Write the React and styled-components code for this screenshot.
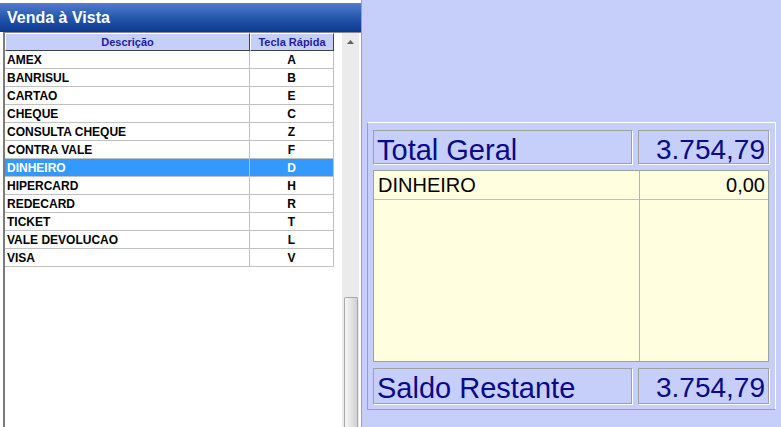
import React from "react";
import styled, { createGlobalStyle } from "styled-components";

const Global = createGlobalStyle`
  html, body { margin: 0; padding: 0; background: #ffffff; }
  body { font-family: "Liberation Sans", Arial, sans-serif; }
  #root { width: 781px; height: 427px; overflow: hidden; }
`;

const Screen = styled.div`
  display: flex;
  width: 781px;
  height: 427px;
  overflow: hidden;
`;

const LeftPanel = styled.div`
  width: 362px;
  flex: none;
  display: flex;
  flex-direction: column;
  background: #ffffff;
  padding-top: 3px;
  box-sizing: border-box;
  border-right: 1px solid #a0a0a0;
`;

const TitleBar = styled.div`
  height: 29px;
  flex: none;
  display: flex;
  align-items: center;
  padding-left: 7px;
  background: linear-gradient(#4f7ed0, #2a5bb0 45%, #0b3990);
  color: #ffffff;
  font-weight: bold;
  font-size: 16px;
`;

const GridFrame = styled.div`
  flex: 1;
  display: flex;
  margin-left: 3px;
  border-left: 2px solid #7c7c7c;
  border-top: 1px solid #8a8a8a;
  min-height: 0;
`;

const GridBody = styled.div`
  width: 337px;
  flex: none;
  background: #ffffff;
`;

const GridRow = styled.div`
  display: grid;
  grid-template-columns: 245px 84px;
  width: 329px;
`;

const HeadCell = styled.div`
  height: 18px;
  box-sizing: border-box;
  background: #c6cefa;
  border-top: 1px solid #ffffff;
  border-left: 1px solid #ffffff;
  border-right: 1px solid #404040;
  border-bottom: 1px solid #404040;
  color: #1e1e98;
  font-size: 11px;
  font-weight: bold;
  text-align: center;
  line-height: 16px;
`;

const Cell = styled.div`
  height: 18px;
  box-sizing: border-box;
  border-right: 1px solid #c0c0c0;
  border-bottom: 1px solid #c0c0c0;
  background: ${(p) => (p.$selected ? "#3399ff" : "#ffffff")};
  color: ${(p) => (p.$selected ? "#ffffff" : "#000000")};
  font-size: 12px;
  font-weight: bold;
  line-height: 18px;
  padding-left: ${(p) => (p.$center ? "0" : "2px")};
  text-align: ${(p) => (p.$center ? "center" : "left")};
  white-space: nowrap;
  overflow: hidden;
`;

const ScrollBar = styled.div`
  width: 17px;
  flex: none;
  display: flex;
  flex-direction: column;
  background: #ebebeb;
`;

const ScrollButton = styled.div`
  height: 17px;
  flex: none;
  display: flex;
  align-items: center;
  justify-content: center;
`;

const ScrollTrack = styled.div`
  flex: 1;
  display: flex;
  flex-direction: column;
  justify-content: flex-end;
`;

const Thumb = styled.div`
  height: 130px;
  margin: 0 1px 0 2px;
  box-sizing: border-box;
  border: 1px solid #a8a8a8;
  border-bottom: none;
  border-radius: 2px 2px 0 0;
  background: linear-gradient(90deg, #f6f6f6, #e4e4e4 50%, #cfcfcf);
`;

const RightPanel = styled.div`
  flex: 1;
  background: #c6cefa;
  padding: 122px 5px 17px 5px;
  box-sizing: border-box;
  display: flex;
  flex-direction: column;
`;

const Frame = styled.div`
  flex: 1;
  display: flex;
  flex-direction: column;
  gap: 6px;
  padding: 7px 6px 5px 5px;
  border-top: 1px solid #ffffff;
  border-right: 1px solid #ffffff;
  border-left: 1px solid #a0a0a0;
  border-bottom: 1px solid #a0a0a0;
`;

const SummaryRow = styled.div`
  display: grid;
  grid-template-columns: 1fr 131px;
  gap: 6px;
  height: ${(p) => p.$h}px;
  flex: none;
`;

const SummaryBox = styled.div`
  box-sizing: border-box;
  border: 1px solid #a0a0a0;
  box-shadow: 1px 1px 0 #ffffff;
  padding: 6px 3px 0 3px;
  color: #0a0a86;
  font-size: ${(p) => (p.$right ? 28 : 29)}px;
  line-height: 26px;
  text-align: ${(p) => (p.$right ? "right" : "left")};
  white-space: nowrap;
`;

const PayTable = styled.div`
  flex: 1;
  display: grid;
  grid-template-columns: 266px 1fr;
  grid-template-rows: 29px 1fr;
  border: 1px solid #a0a0a0;
  background: #ffffe0;
`;

const PayCell = styled.div`
  display: flex;
  align-items: center;
  justify-content: ${(p) => (p.$right ? "flex-end" : "flex-start")};
  padding: 0 3px 0 4px;
  border-right: ${(p) => (p.$right ? "none" : "1px solid #b4b4b4")};
  border-bottom: ${(p) => (p.$filler ? "none" : "1px solid #c0c0c0")};
  font-size: 20px;
  color: #000000;
`;

const rows = [
  ["AMEX", "A"],
  ["BANRISUL", "B"],
  ["CARTAO", "E"],
  ["CHEQUE", "C"],
  ["CONSULTA CHEQUE", "Z"],
  ["CONTRA VALE", "F"],
  ["DINHEIRO", "D"],
  ["HIPERCARD", "H"],
  ["REDECARD", "R"],
  ["TICKET", "T"],
  ["VALE DEVOLUCAO", "L"],
  ["VISA", "V"],
];

export default function App() {
  return (
    <>
      <Global />
      <Screen>
        <LeftPanel>
          <TitleBar>Venda à Vista</TitleBar>
          <GridFrame>
            <GridBody>
              <GridRow>
                <HeadCell>Descrição</HeadCell>
                <HeadCell>Tecla Rápida</HeadCell>
              </GridRow>
              {rows.map(([name, key]) => {
                const sel = name === "DINHEIRO";
                return (
                  <GridRow key={name}>
                    <Cell $selected={sel}>{name}</Cell>
                    <Cell $selected={sel} $center>
                      {key}
                    </Cell>
                  </GridRow>
                );
              })}
            </GridBody>
            <ScrollBar>
              <ScrollButton>
                <svg width="7" height="4" viewBox="0 0 7 4">
                  <path d="M0 4 L3.5 0 L7 4 Z" fill="#606060" />
                </svg>
              </ScrollButton>
              <ScrollTrack>
                <Thumb />
              </ScrollTrack>
            </ScrollBar>
          </GridFrame>
        </LeftPanel>
        <RightPanel>
          <Frame>
            <SummaryRow $h={34}>
              <SummaryBox>Total Geral</SummaryBox>
              <SummaryBox $right>3.754,79</SummaryBox>
            </SummaryRow>
            <PayTable>
              <PayCell>DINHEIRO</PayCell>
              <PayCell $right>0,00</PayCell>
              <PayCell $filler />
              <PayCell $filler $right />
            </PayTable>
            <SummaryRow $h={36}>
              <SummaryBox>Saldo Restante</SummaryBox>
              <SummaryBox $right>3.754,79</SummaryBox>
            </SummaryRow>
          </Frame>
        </RightPanel>
      </Screen>
    </>
  );
}
